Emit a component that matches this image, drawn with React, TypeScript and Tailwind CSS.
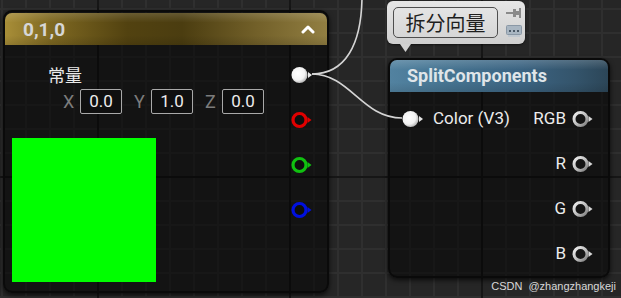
import React from "react";

const FONT = "font-[family-name:Roboto,'Noto_Sans_CJK_SC',sans-serif]";

function FilledPin() {
  return (
    <svg width="22" height="18" viewBox="0 0 22 18">
      <defs>
        <radialGradient id="fp" cx="0.4" cy="0.4" r="0.6">
          <stop offset="0" stopColor="#ffffff" />
          <stop offset="0.7" stopColor="#f2f2f2" />
          <stop offset="1" stopColor="#bdbdbd" />
        </radialGradient>
      </defs>
      <circle cx="8.5" cy="9" r="8" fill="url(#fp)" />
      <polygon points="17,6 21,9 17,12" fill="#e6e6e6" />
    </svg>
  );
}

function RingPin({ color }: { color: string }) {
  return (
    <svg width="22" height="18" viewBox="0 0 22 18">
      <circle cx="8.5" cy="9" r="6.5" fill="#0e0e0e" stroke={color} strokeWidth="3.2" />
      <polygon points="16.5,6 20.5,9 16.5,12" fill={color} />
    </svg>
  );
}

function GrayPin() {
  return (
    <svg width="22" height="18" viewBox="0 0 22 18">
      <defs>
        <linearGradient id="gp" x1="0" y1="0" x2="1" y2="1">
          <stop offset="0" stopColor="#f0f0f0" />
          <stop offset="0.6" stopColor="#b8b8b8" />
          <stop offset="1" stopColor="#7a7a7a" />
        </linearGradient>
      </defs>
      <circle cx="8.5" cy="9" r="6.5" fill="#151515" stroke="url(#gp)" strokeWidth="3" />
      <polygon points="16.5,6 20.5,9 16.5,12" fill="#d8d8d8" />
    </svg>
  );
}

function Grid() {
  const v: number[] = [];
  for (let x = 2; x < 621; x += 24) v.push(x);
  const h: number[] = [];
  for (let y = 9; y < 298; y += 24) h.push(y);
  return (
    <svg className="absolute inset-0" width="621" height="298">
      {v.map((x) => (
        <line key={"v" + x} x1={x} y1={0} x2={x} y2={298} stroke="#2f2f2f" strokeWidth="2" />
      ))}
      {h.map((y) => (
        <line key={"h" + y} x1={0} y1={y} x2={621} y2={y} stroke="#2f2f2f" strokeWidth="2" />
      ))}
      {[98, 290, 482].map((x) => (
        <line key={"mv" + x} x1={x} y1={0} x2={x} y2={298} stroke="#161616" strokeWidth="2" />
      ))}
      <line x1={0} y1={177} x2={621} y2={177} stroke="#161616" strokeWidth="2" />
    </svg>
  );
}

function VecField({ label, value }: { label: string; value: string }) {
  return (
    <div className="flex items-center gap-[5px]">
      <span className="text-[18px] leading-none text-[#7c7c7c] w-[12px]">{label}</span>
      <div className="w-[42px] h-[25px] border border-[#a9a9a9] rounded-[2px] bg-[#0f0f0f] flex items-center justify-center text-[17px] text-[#ececec] leading-none">
        {value}
      </div>
    </div>
  );
}

export default function App() {
  return (
    <div className={`relative w-[621px] h-[298px] overflow-hidden bg-[#262626] ${FONT}`}>
      <Grid />

      {/* Comment bubble */}
      <div className="absolute left-[387px] top-[1px] w-[138px] h-[43px] rounded-[6px] bg-[linear-gradient(180deg,#e6e6e6,#cfcfcf)] flex items-start pt-[6px] pl-[6px] gap-[8px] shadow-[0_1px_2px_rgba(0,0,0,0.5)]">
        <div className="w-[105px] h-[31px] border border-[#4e4e4e] rounded-[5px] bg-[linear-gradient(180deg,#e4e4e4,#d6d6d6)] flex items-center justify-center text-[20px] leading-none text-[#1e1e1e] font-[family-name:'Noto_Sans_CJK_SC',sans-serif]">
          拆分向量
        </div>
        <div className="flex flex-col items-center gap-[7px] pt-[1px]">
          <svg width="16" height="10" viewBox="0 0 16 10">
            <rect x="0" y="4" width="7" height="2" fill="#8a8a8a" />
            <rect x="7" y="1" width="3" height="8" fill="#8a8a8a" />
            <rect x="10" y="3" width="3" height="4" fill="#8a8a8a" />
            <rect x="13" y="0" width="2" height="10" fill="#8a8a8a" />
          </svg>
          <svg width="16" height="12" viewBox="0 0 16 12">
            <rect x="0.5" y="0.5" width="15" height="9" rx="1" fill="#a9b6c2" stroke="#8a98a6" />
            <rect x="2" y="10" width="12" height="2" fill="#c0c8d0" />
            <rect x="3" y="5" width="2" height="2" fill="#4a5866" />
            <rect x="7" y="5" width="2" height="2" fill="#4a5866" />
            <rect x="11" y="5" width="2" height="2" fill="#4a5866" />
          </svg>
        </div>
      </div>
      <svg className="absolute left-[400px] top-[44px]" width="12" height="9" viewBox="0 0 12 9">
        <polygon points="0,0 11,0 5.5,8" fill="#d2d2d2" />
      </svg>

      {/* Node 1: constant */}
      <div className="absolute left-[3px] top-[10px] w-[326px] h-[283px] rounded-[9px] border-2 border-[#0a0a0a] bg-black/50 shadow-[0_2px_5px_rgba(0,0,0,0.7)] flex flex-col">
        <div className="mt-[1px] h-[32px] rounded-t-[7px] bg-[linear-gradient(90deg,#a88e38_0%,#7f6922_14%,#524210_38%,#4b3d10_55%,#726029_78%,#927f42_100%)] relative flex items-center justify-between pl-[18px] pr-[12px]">
          <div className="absolute inset-0 rounded-t-[7px] bg-[linear-gradient(180deg,rgba(255,255,255,0.14)_0%,rgba(255,255,255,0)_30%,rgba(0,0,0,0)_70%,rgba(0,0,0,0.12)_100%)]" />
          <span className="relative text-[19px] font-bold text-[#d6d6d6] leading-none">0,1,0</span>
          <svg className="relative" width="14" height="10" viewBox="0 0 14 10">
            <polyline points="2,8 7,3 12,8" fill="none" stroke="#ffffff" strokeWidth="3" strokeLinecap="round" strokeLinejoin="round" />
          </svg>
        </div>
        <div className="flex flex-1">
          <div className="flex-1 flex flex-col pl-[7px]">
            <div className="ml-[36px] mt-[20px] h-[20px] text-[17px] leading-[20px] text-[#eaeaea] font-[family-name:'Noto_Sans_CJK_SC',sans-serif]">
              常量
            </div>
            <div className="ml-[51px] mt-[4px] flex items-center gap-[12px]">
              <VecField label="X" value="0.0" />
              <VecField label="Y" value="1.0" />
              <VecField label="Z" value="0.0" />
            </div>
            <div className="mt-[24px] w-[144px] h-[144px] bg-[#00ff00]" />
          </div>
          <div className="flex flex-col pt-[7px] pr-[14px]">
            <div className="h-[45px] flex items-center"><FilledPin /></div>
            <div className="h-[45px] flex items-center"><RingPin color="#e00000" /></div>
            <div className="h-[45px] flex items-center"><RingPin color="#10c010" /></div>
            <div className="h-[45px] flex items-center"><RingPin color="#0010e0" /></div>
          </div>
        </div>
      </div>

      {/* Node 2: SplitComponents */}
      <div className="absolute left-[388px] top-[58px] w-[222px] h-[220px] rounded-[9px] border-2 border-[#0a0a0a] bg-black/50 shadow-[0_2px_5px_rgba(0,0,0,0.7)] flex flex-col">
        <div className="h-[32px] rounded-t-[7px] bg-[linear-gradient(90deg,#5282a0_0%,#45728f_30%,#3c6482_60%,#34546b_85%,#2c4658_100%)] relative flex items-center pl-[17px]">
          <div className="absolute inset-0 rounded-t-[7px] bg-[linear-gradient(180deg,rgba(255,255,255,0.16)_0%,rgba(255,255,255,0)_30%,rgba(0,0,0,0)_70%,rgba(0,0,0,0.1)_100%)]" />
          <span className="relative text-[18px] font-bold text-[#dfe5e9] leading-none">SplitComponents</span>
        </div>
        <div className="flex flex-col pt-[4px] pl-[12px] pr-[14px] text-[17px] text-[#ececec] leading-none">
          <div className="h-[45px] flex items-center justify-between">
            <div className="flex items-center gap-[9px]">
              <FilledPin />
              <span>Color (V3)</span>
            </div>
            <div className="flex items-center gap-[6px]">
              <span>RGB</span>
              <GrayPin />
            </div>
          </div>
          <div className="h-[45px] flex items-center justify-end gap-[6px]">
            <span>R</span>
            <GrayPin />
          </div>
          <div className="h-[45px] flex items-center justify-end gap-[6px]">
            <span>G</span>
            <GrayPin />
          </div>
          <div className="h-[45px] flex items-center justify-end gap-[6px]">
            <span>B</span>
            <GrayPin />
          </div>
        </div>
      </div>

      {/* Wires */}
      <svg className="absolute inset-0 pointer-events-none" width="621" height="298">
        <path d="M312 74 C 350 74, 362 118, 402 118" fill="none" stroke="#d4d4d4" strokeWidth="1.6" />
        <path d="M312 74 C 345 74, 362 45, 362 -5" fill="none" stroke="#d4d4d4" strokeWidth="1.6" />
      </svg>

      <div className="absolute right-[5px] top-[279px] flex gap-[6px] text-[11px] leading-[14px] text-[#d8d8d8] font-[family-name:'Liberation_Sans',sans-serif] whitespace-nowrap">
        <span>CSDN</span>
        <span>@zhangzhangkeji</span>
      </div>
    </div>
  );
}
